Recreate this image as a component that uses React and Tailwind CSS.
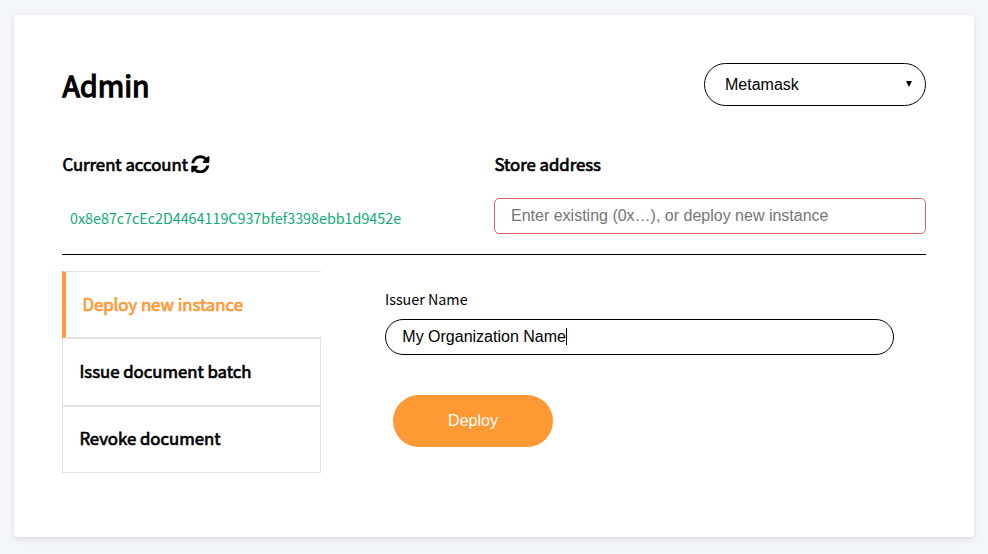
import { FaSyncAlt } from "react-icons/fa";

const tabs = [
  { label: "Issue document batch", padding: "pb-px" },
  { label: "Revoke document", padding: "pb-[2px]" },
];
const heading =
  "font-normal text-[16.76px] leading-[27px] tracking-normal [-webkit-text-stroke:0.7px_currentColor] whitespace-nowrap";

export default function App() {
  return (
    <div className="flex h-[554px] w-[988px] bg-[#f3f7fa] pt-[15px] pl-[14px] text-black font-['Noto_Sans_CJK_SC',sans-serif]">
      <main className="h-[522px] w-[960px] rounded-[4px] bg-white px-12 pt-12 shadow-[0_2px_4px_0_rgba(0,0,0,0.08),0_2px_10px_0_rgba(0,0,0,0.05)]">
        <header className="flex h-[43px] items-center justify-between">
          <h1 className="pt-px pl-[0.5px] text-[28.65px] leading-[40px] font-normal [-webkit-text-stroke:1.3px_currentColor]">Admin</h1>
          <button className="flex h-[43px] w-[222px] items-center justify-between rounded-full border border-black pr-[13px] pl-5 text-[16px] font-['Liberation_Sans',sans-serif]">
            <span>Metamask</span>
            <svg className="mb-px h-[6px] w-[6px]" viewBox="0 0 6 6">
              <path d="M0 0h6L3 6z" />
            </svg>
          </button>
        </header>
        <section className="mt-[45px] flex h-[104px] border-b border-black">
          <div className="w-[432px]">
            <h2 className={`${heading} flex items-center gap-[3px] pl-[0.4px]`}>
              Current account <FaSyncAlt className="mb-px h-[18.7px] w-[18.7px] [stroke-width:0]" />
            </h2>
            <p className="mt-[28px] pl-2 text-[14.32px] leading-6 text-[#10ab76]">0x8e87c7cEc2D4464119C937bfef3398ebb1d9452e</p>
          </div>
          <div className="w-[432px]">
            <h2 className={`${heading} pl-[0.4px]`}>Store address</h2>
            <input
              className="mt-[20px] block h-9 w-full rounded-[5px] border border-[#e55f62] px-4 text-[16px] placeholder-[#757575] outline-none font-['Liberation_Sans',sans-serif]"
              placeholder="Enter existing (0x…), or deploy new instance"
            />
          </div>
        </section>
        <section className="mt-4 flex">
          <nav className="w-[259px]">
            <div className={`${heading} flex h-[67px] items-center border-y border-l-4 border-y-[#e2e2e2] border-l-[#ff9933] pb-px pl-[16.4px] text-[#ff9933]`}>
              Deploy new instance
            </div>
            {tabs.map(({ label, padding }) => (
              <div key={label} className={`${heading} ${padding} flex h-[67.5px] items-center border border-[#e2e2e2] pl-[16.4px]`}>
                {label}
              </div>
            ))}
          </nav>
          <div className="pt-4 pl-16">
            <div className="h-8 text-[14.32px] leading-6">Issuer Name</div>
            <div className="flex h-9 w-[509px] items-center rounded-full border border-black px-4 text-[16px] font-['Liberation_Sans',sans-serif]">
              <span className="pl-[0.3px]">My Organization Name</span>
              <span className="mb-px h-[17px] w-px bg-black" />
            </div>
            <button className="mt-10 ml-2 h-[52px] w-40 rounded-full bg-[#ff9933] text-[16px] text-white font-['Liberation_Sans',sans-serif]">
              Deploy
            </button>
          </div>
        </section>
      </main>
    </div>
  );
}
